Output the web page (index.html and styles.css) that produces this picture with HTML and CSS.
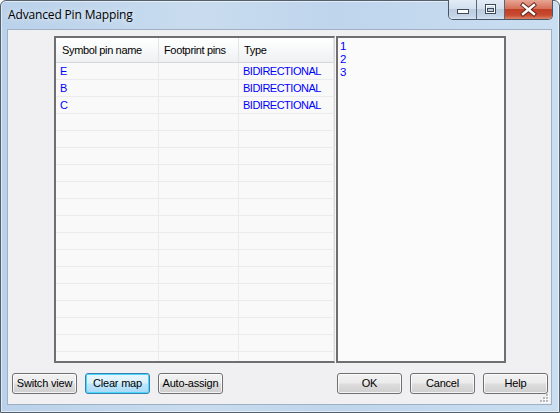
FILE: index.html
```html
<!DOCTYPE html>
<html>
<head>
<meta charset="utf-8">
<link rel="stylesheet" href="styles.css">
</head>
<body>
<div class="window">
  <div class="titlebar">
    <span class="title">Advanced Pin Mapping</span>
    <div class="caption">
      <div class="cbtn cmin">
        <svg width="27" height="18" viewBox="0 0 27 18"><rect x="8.5" y="9.5" width="11" height="4" fill="#ffffff" stroke="#3d4a59" stroke-width="1"/></svg>
      </div>
      <div class="cbtn cmax">
        <svg width="27" height="18" viewBox="0 0 27 18"><rect x="8.5" y="4.5" width="10" height="9" fill="none" stroke="#3d4a59" stroke-width="1"/><rect x="9.5" y="5.5" width="8" height="7" fill="none" stroke="#ffffff" stroke-width="1"/><rect x="10.5" y="8.5" width="6" height="3" fill="none" stroke="#3d4a59" stroke-width="1"/></svg>
      </div>
      <div class="cbtn cclose">
        <svg width="47" height="18" viewBox="0 0 47 18"><path d="M18 5 L29 14 M29 5 L18 14" stroke="#5a2218" stroke-width="4.2" stroke-linecap="square"/><path d="M18 5 L29 14 M29 5 L18 14" stroke="#ffffff" stroke-width="2.4" stroke-linecap="square"/></svg>
      </div>
    </div>
  </div>
  <div class="client">
    <div class="panes">
      <div class="table-pane">
        <div class="row head">
          <div class="cell">Symbol pin name</div>
          <div class="cell">Footprint pins</div>
          <div class="cell">Type</div>
        </div>
        <div class="row"><div class="cell">E</div><div class="cell"></div><div class="cell">BIDIRECTIONAL</div></div>
        <div class="row"><div class="cell">B</div><div class="cell"></div><div class="cell">BIDIRECTIONAL</div></div>
        <div class="row"><div class="cell">C</div><div class="cell"></div><div class="cell">BIDIRECTIONAL</div></div>
        <div class="row"><div class="cell"></div><div class="cell"></div><div class="cell"></div></div>
        <div class="row"><div class="cell"></div><div class="cell"></div><div class="cell"></div></div>
        <div class="row"><div class="cell"></div><div class="cell"></div><div class="cell"></div></div>
        <div class="row"><div class="cell"></div><div class="cell"></div><div class="cell"></div></div>
        <div class="row"><div class="cell"></div><div class="cell"></div><div class="cell"></div></div>
        <div class="row"><div class="cell"></div><div class="cell"></div><div class="cell"></div></div>
        <div class="row"><div class="cell"></div><div class="cell"></div><div class="cell"></div></div>
        <div class="row"><div class="cell"></div><div class="cell"></div><div class="cell"></div></div>
        <div class="row"><div class="cell"></div><div class="cell"></div><div class="cell"></div></div>
        <div class="row"><div class="cell"></div><div class="cell"></div><div class="cell"></div></div>
        <div class="row"><div class="cell"></div><div class="cell"></div><div class="cell"></div></div>
        <div class="row"><div class="cell"></div><div class="cell"></div><div class="cell"></div></div>
        <div class="row"><div class="cell"></div><div class="cell"></div><div class="cell"></div></div>
        <div class="row"><div class="cell"></div><div class="cell"></div><div class="cell"></div></div>
        <div class="row"><div class="cell"></div><div class="cell"></div><div class="cell"></div></div>
      </div>
      <div class="splitter"></div>
      <div class="list-pane">
        <div class="item">1</div>
        <div class="item">2</div>
        <div class="item">3</div>
      </div>
    </div>
    <div class="buttons">
      <div class="group">
        <div class="btn">Switch view</div>
        <div class="btn focus">Clear map</div>
        <div class="btn">Auto-assign</div>
      </div>
      <div class="group">
        <div class="btn">OK</div>
        <div class="btn">Cancel</div>
        <div class="btn">Help</div>
      </div>
    </div>
    <svg class="grip" width="9" height="9" viewBox="0 0 9 9">
      <g fill="#ffffff"><rect x="7" y="1" width="2" height="2"/><rect x="4" y="4" width="2" height="2"/><rect x="7" y="4" width="2" height="2"/><rect x="1" y="7" width="2" height="2"/><rect x="4" y="7" width="2" height="2"/><rect x="7" y="7" width="2" height="2"/></g>
      <g fill="#b7b9bd"><rect x="6" y="0" width="2" height="2"/><rect x="3" y="3" width="2" height="2"/><rect x="6" y="3" width="2" height="2"/><rect x="0" y="6" width="2" height="2"/><rect x="3" y="6" width="2" height="2"/><rect x="6" y="6" width="2" height="2"/></g>
    </svg>
  </div>
</div>
</body>
</html>
```
FILE: styles.css
```css
html, body {
  margin: 0;
  padding: 0;
  background: #ffffff;
}
body {
  font-family: "Liberation Sans", Arial, sans-serif;
  font-size: 11px;
  color: #000000;
}
.window {
  width: 560px;
  height: 413px;
  box-sizing: border-box;
  border: 1px solid #55606d;
  border-radius: 6px 6px 0 0;
  background: linear-gradient(90deg, #b9d1ea 0%, #c9dcef 35%, #bfd5ec 60%, #cadef1 100%);
  padding: 0 7px 7px 6px;
  display: flex;
  flex-direction: column;
  box-shadow: inset 0 0 0 1px rgba(255,255,255,0.55);
}
.titlebar {
  height: 28px;
  display: flex;
  align-items: flex-start;
  flex-shrink: 0;
}
.title {
  font-family: "Open Sans", "Liberation Sans", sans-serif;
  font-size: 12px;
  letter-spacing: -0.15px;
  color: #000000;
  padding: 6px 0 0 1px;
  line-height: 16px;
  text-shadow: 0 0 6px rgba(255,255,255,0.9);
}
.caption {
  margin-left: auto;
  display: flex;
  border: 1px solid #48576a;
  border-top: none;
  border-radius: 0 0 5px 5px;
  overflow: hidden;
  margin-top: -1px;
  margin-right: -1px;
}
.cbtn {
  height: 19px;
  display: flex;
}
.cmin, .cmax {
  width: 27px;
  border-right: 1px solid #58677a;
  background: linear-gradient(180deg, #e3ecf6 0%, #d4e0ee 45%, #bccde0 50%, #c5d5e7 85%, #d6e3f1 100%);
}
.cclose {
  width: 47px;
  background: linear-gradient(180deg, #e7a595 0%, #d6715a 45%, #c13f27 50%, #c84a30 80%, #dc8564 100%);
}
.client {
  flex: 1;
  position: relative;
  border: 1px solid #9fb0c3;
  background: #f0f0f2;
  display: flex;
  flex-direction: column;
}
.panes {
  margin: 6px 45px 0 46px;
  height: 327px;
  display: flex;
}
.table-pane {
  width: 278px;
  border: 2px solid #6f6f72;
  border-right: 1px solid #d9d9dc;
  background: #f9f9fa;
  overflow: hidden;
}
.row {
  display: grid;
  grid-template-columns: 103px 80px 1fr;
  height: 17px;
}
.cell {
  box-sizing: border-box;
  border-right: 1px solid #ebebed;
  border-bottom: 1px solid #ebebed;
  padding: 0 0 0 4px;
  line-height: 16px;
  color: #0000ff;
  white-space: nowrap;
  overflow: hidden;
  letter-spacing: -0.5px;
}
.row.head {
  height: 25px;
}
.head .cell {
  color: #000000;
  line-height: 24px;
  padding-left: 6px;
  letter-spacing: -0.35px;
  background: linear-gradient(180deg, #ffffff 0%, #f7f8f9 50%, #eff0f2 100%);
  border-right: 1px solid #e2e3e5;
  border-bottom: 1px solid #d6d7da;
}
.head .cell + .cell {
  padding-left: 5px;
}
.splitter {
  width: 1px;
  background: #f7f7f8;
}
.list-pane {
  flex: 1;
  border: 2px solid #6f6f72;
  background: #fbfbfc;
  padding: 2px 0 0 2px;
}
.item {
  color: #0000ff;
  line-height: 13px;
  font-size: 11.5px;
}
.buttons {
  margin-top: 10px;
  padding: 0 3px 0 4px;
  display: flex;
  justify-content: space-between;
}
.group {
  display: flex;
  gap: 8px;
}
.btn {
  width: 65px;
  height: 21px;
  box-sizing: border-box;
  border: 1px solid #707070;
  border-radius: 3px;
  background: linear-gradient(180deg, #f2f2f2 0%, #ebebeb 48%, #dddddd 52%, #cfcfcf 100%);
  box-shadow: inset 0 0 0 1px rgba(255,255,255,0.75);
  text-align: center;
  line-height: 19px;
  color: #000000;
  letter-spacing: -0.2px;
}
.btn.focus {
  border-color: #3c7fb1;
  background: linear-gradient(180deg, #eaf6fd 0%, #d9f0fc 48%, #bee6fd 52%, #a7d9f5 100%);
  box-shadow: inset 0 0 0 1px #48d8fb;
}
.grip {
  position: absolute;
  right: 2px;
  bottom: 1px;
}
```
